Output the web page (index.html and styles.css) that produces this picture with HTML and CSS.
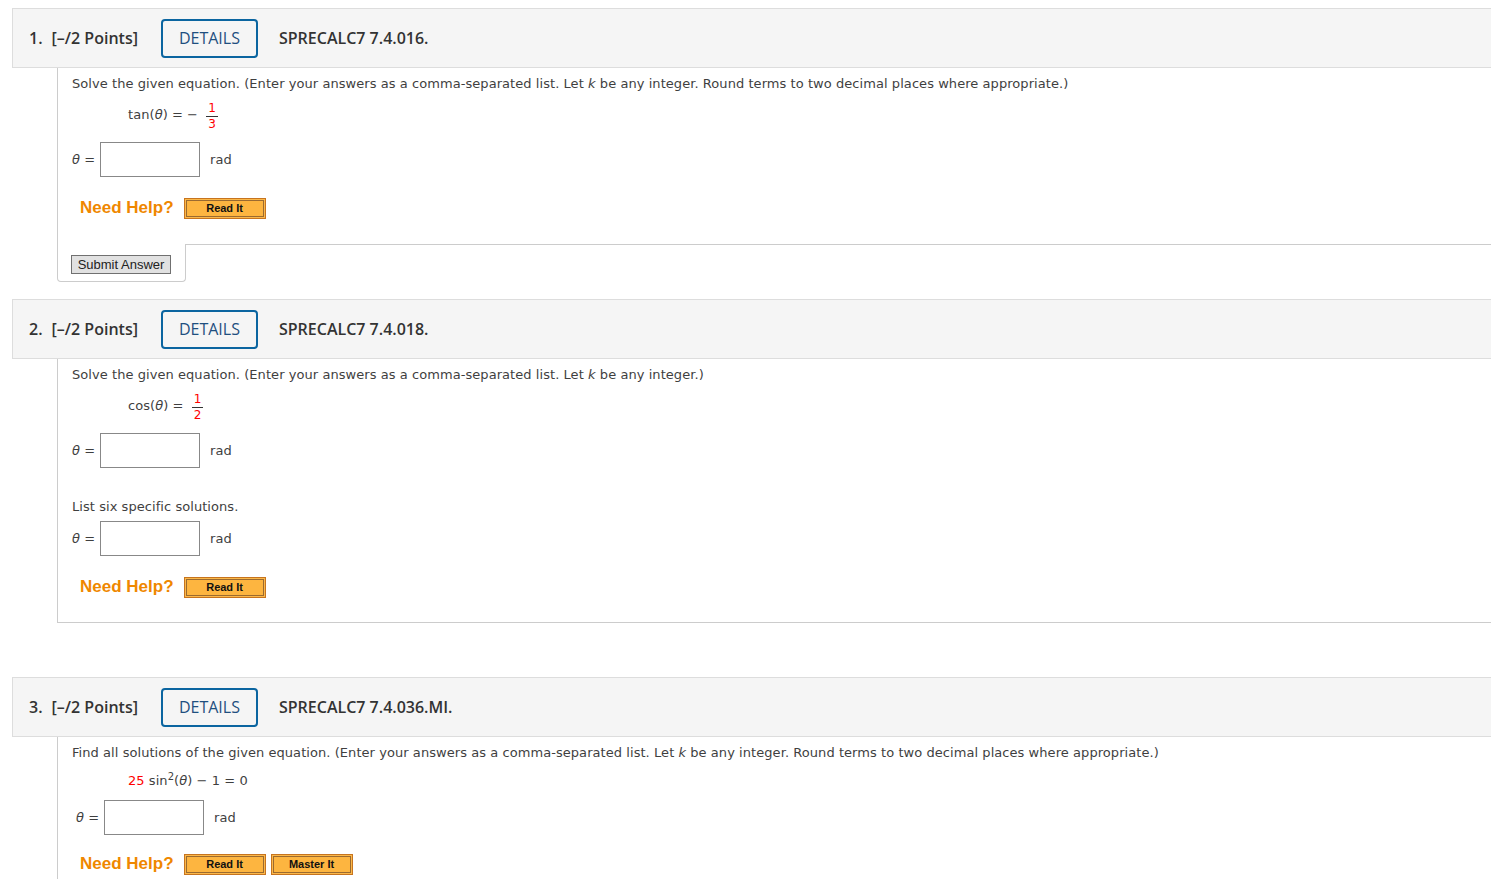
FILE: index.html
```html
<!DOCTYPE html>
<html>
<head>
<meta charset="utf-8">
<link rel="stylesheet" href="styles.css">
</head>
<body>
<div class="page">

  <div class="question">
    <div class="qhead">
      <span class="qnum">1.</span>
      <span class="qpts">[–/2 Points]</span>
      <span class="details">DETAILS</span>
      <span class="qcode">SPRECALC7 7.4.016.</span>
    </div>
    <div class="qcontent">
      <div class="prompt">Solve the given equation. (Enter your answers as a comma-separated list. Let <i>k</i> be any integer. Round terms to two decimal places where appropriate.)</div>
      <div class="eq"><span class="lhs">tan(<i>θ</i>) = −&nbsp;</span><span class="frac"><span class="num">1</span><span class="den">3</span></span></div>
      <div class="answer"><span class="var"><i>θ</i> =</span><span class="box"></span><span class="unit">rad</span></div>
      <div class="help"><span class="needhelp">Need Help?</span><span class="hbtn">Read It</span></div>
    </div>
    <div class="footer">
      <div class="submitcell"><span class="submit">Submit Answer</span></div>
      <div class="filler"></div>
    </div>
  </div>

  <div class="question q2">
    <div class="qhead">
      <span class="qnum">2.</span>
      <span class="qpts">[–/2 Points]</span>
      <span class="details">DETAILS</span>
      <span class="qcode">SPRECALC7 7.4.018.</span>
    </div>
    <div class="qcontent closed">
      <div class="prompt">Solve the given equation. (Enter your answers as a comma-separated list. Let <i>k</i> be any integer.)</div>
      <div class="eq"><span class="lhs">cos(<i>θ</i>) = </span><span class="frac"><span class="num">1</span><span class="den">2</span></span></div>
      <div class="answer"><span class="var"><i>θ</i> =</span><span class="box"></span><span class="unit">rad</span></div>
      <div class="prompt list">List six specific solutions.</div>
      <div class="answer tight"><span class="var"><i>θ</i> =</span><span class="box"></span><span class="unit">rad</span></div>
      <div class="help"><span class="needhelp">Need Help?</span><span class="hbtn">Read It</span></div>
    </div>
  </div>

  <div class="question q3">
    <div class="qhead">
      <span class="qnum">3.</span>
      <span class="qpts">[–/2 Points]</span>
      <span class="details">DETAILS</span>
      <span class="qcode">SPRECALC7 7.4.036.MI.</span>
    </div>
    <div class="qcontent">
      <div class="prompt">Find all solutions of the given equation. (Enter your answers as a comma-separated list. Let <i>k</i> be any integer. Round terms to two decimal places where appropriate.)</div>
      <div class="eq flat"><span class="red">25</span>&nbsp;sin<sup>2</sup>(<i>θ</i>) − 1 = 0</div>
      <div class="answer shifted"><span class="var"><i>θ</i> =</span><span class="box"></span><span class="unit">rad</span></div>
      <div class="help"><span class="needhelp">Need Help?</span><span class="hbtn">Read It</span><span class="hbtn">Master It</span></div>
    </div>
  </div>

</div>
</body>
</html>
```

FILE: styles.css
```css
html {
  overflow: hidden;
}
body {
  margin: 8px 0 0 8px;
  background: #ffffff;
  font-family: "DejaVu Sans", Verdana, sans-serif;
  font-size: 13px;
  letter-spacing: 0.06px;
  color: #3f3f3f;
}
.page {
  margin-left: 4px;
  margin-right: -40px;
}
.question {
  margin-bottom: 17px;
}
.q2 {
  margin-bottom: 54px;
}
.q3 {
  margin-bottom: 0;
}
.qhead {
  height: 58px;
  background: #f5f5f5;
  border-top: 1px solid #dddddd;
  border-bottom: 1px solid #dddddd;
  border-left: 1px solid #dddddd;
  display: flex;
  align-items: center;
  padding-left: 16px;
  font-family: "Open Sans", sans-serif;
  font-weight: 600;
  font-size: 16px;
  letter-spacing: 0;
  color: #333333;
}
.qnum {
  margin-right: 9px;
}
.qpts {
  margin-right: 23px;
}
.details {
  box-sizing: border-box;
  width: 97px;
  height: 39px;
  border: 2px solid #0b65a0;
  border-radius: 4px;
  display: flex;
  align-items: center;
  justify-content: center;
  font-weight: 400;
  color: #1f4f7f;
  background: #f5f5f5;
  margin-right: 21px;
}
.qcode {
  color: #333333;
}
.qcontent {
  margin-left: 45px;
  border-left: 1px solid #cccccc;
  padding: 5px 0 25px 14px;
}
.qcontent.closed {
  border-bottom: 1px solid #cccccc;
  padding-bottom: 24px;
}
.q3 .qcontent {
  padding-bottom: 4px;
}
.prompt {
  line-height: 22px;
}
.prompt.list {
  margin-top: 28px;
}
.eq {
  margin-left: 56px;
  margin-top: 6px;
  display: flex;
  align-items: center;
  white-space: pre;
}
.lhs {
  padding-bottom: 4px;
}
.eq.flat {
  margin-top: 7px;
  display: block;
  line-height: 20px;
}
.eq sup {
  font-size: 10px;
  line-height: 0;
  vertical-align: 5px;
}
.red {
  color: #ff0000;
}
.frac {
  display: inline-flex;
  flex-direction: column;
  align-items: center;
  color: #ff0000;
  font-size: 12px;
  line-height: 15px;
  margin-left: 4px;
}
.frac .num {
  border-bottom: 1px solid #333333;
  padding: 0 2px;
}
.answer {
  display: flex;
  align-items: center;
  margin-top: 10px;
}
.answer.tight {
  margin-top: 3px;
}
.answer.shifted {
  margin-top: 9px;
  padding-left: 4px;
}
.var {
  width: 28px;
}
.box {
  box-sizing: border-box;
  width: 100px;
  height: 35px;
  border: 1px solid #888888;
  background: #ffffff;
}
.unit {
  margin-left: 10px;
}
.help {
  display: flex;
  align-items: center;
  margin-top: 20px;
  padding-left: 8px;
  height: 22px;
}
.q3 .help {
  margin-top: 18px;
}
.needhelp {
  font-family: "Liberation Sans", Arial, sans-serif;
  font-weight: 700;
  font-size: 17px;
  letter-spacing: 0;
  color: #ef8700;
  margin-right: 10px;
}
.hbtn {
  box-sizing: border-box;
  width: 82px;
  height: 21px;
  border: 1px solid #c7741e;
  background: #fdb540;
  box-shadow: inset 0 0 0 1px #fbb84a, inset 0 0 0 2px #9b6a30;
  display: flex;
  align-items: center;
  justify-content: center;
  font-family: "Liberation Sans", Arial, sans-serif;
  font-weight: 700;
  font-size: 11px;
  letter-spacing: 0;
  color: #111111;
  margin-right: 5px;
}
.footer {
  display: flex;
  margin-left: 45px;
}
.submitcell {
  box-sizing: border-box;
  width: 129px;
  height: 38px;
  border-left: 1px solid #cccccc;
  border-right: 1px solid #cccccc;
  border-bottom: 1px solid #cccccc;
  border-radius: 0 0 4px 4px;
  padding: 11px 0 0 13px;
}
.submit {
  display: inline-block;
  box-sizing: border-box;
  width: 100px;
  height: 19px;
  line-height: 17px;
  text-align: center;
  border: 1px solid #707070;
  background: #e1e1e1;
  font-family: "Liberation Sans", Arial, sans-serif;
  font-size: 13px;
  letter-spacing: 0;
  color: #222222;
  vertical-align: top;
}
.filler {
  flex: 1;
  border-top: 1px solid #cccccc;
}
```
